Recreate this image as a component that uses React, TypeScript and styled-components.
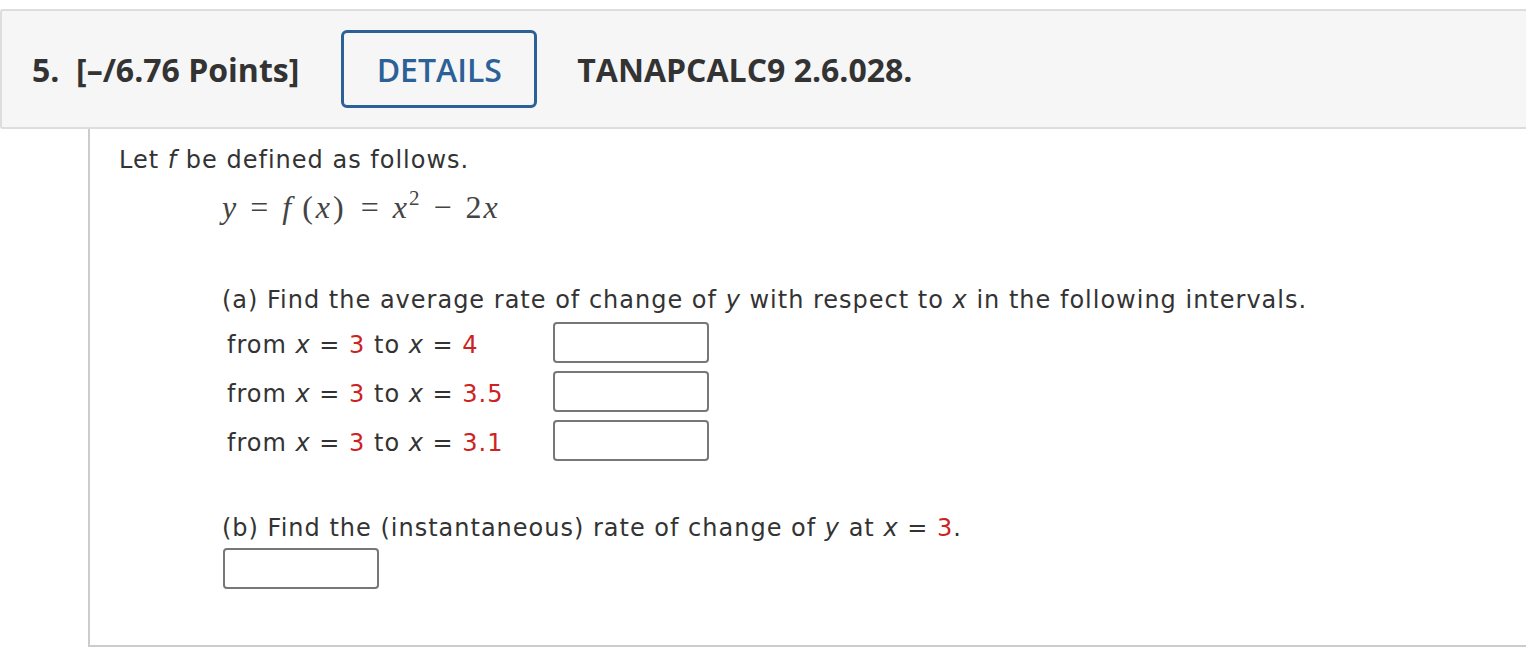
import React from 'react';
import styled, { createGlobalStyle } from 'styled-components';

const GlobalStyle = createGlobalStyle`
  html, body {
    margin: 0;
    padding: 0;
    background: #ffffff;
    overflow: hidden;
  }
`;

const Page = styled.div`
  width: 1526px;
  height: 654px;
  padding-top: 9px;
  box-sizing: border-box;
  overflow: hidden;
`;

const Header = styled.div`
  display: flex;
  align-items: center;
  height: 116px;
  box-sizing: content-box;
  width: 1540px;
  background: #f6f6f6;
  border: 2px solid #dddddd;
  border-right: none;
  border-radius: 3px 0 0 3px;
  padding-left: 30px;
  font-family: "Open Sans", sans-serif;
  font-weight: 700;
  font-size: 32px;
  color: #333333;
`;

const Points = styled.span`
  margin-right: 42px;
  white-space: pre;
`;

const DetailsButton = styled.div`
  display: flex;
  align-items: center;
  justify-content: center;
  width: 196px;
  height: 78px;
  box-sizing: border-box;
  border: 3px solid #2b6196;
  border-radius: 6px;
  color: #2b6196;
  font-weight: 600;
  margin-right: 40px;
`;

const Code = styled.span``;

const Body = styled.div`
  margin-left: 88px;
  height: 518px;
  box-sizing: border-box;
  border-left: 2px solid #cccccc;
  border-bottom: 2px solid #cccccc;
  padding: 16px 0 0 29px;
  font-family: "DejaVu Sans", Verdana, sans-serif;
  font-size: 24px;
  letter-spacing: 1px;
  color: #333333;
`;

const Line = styled.div<{ $indent?: boolean; $top?: number }>`
  margin-left: ${(p) => (p.$indent ? 103 : 0)}px;
  margin-top: ${(p) => p.$top ?? 0}px;
  line-height: 30px;
  white-space: nowrap;
`;

const Math = styled.div`
  display: flex;
  align-items: baseline;
  margin: 15px 0 0 103px;
  font-family: "Liberation Serif", "Times New Roman", serif;
  font-size: 32px;
  letter-spacing: 0;
  color: #444444;
  line-height: 34px;
`;

const Var = styled.i<{ $r?: number }>`
  font-family: "Liberation Serif", serif;
  margin-right: ${(p) => p.$r ?? 0}px;
`;

const Op = styled.span`
  margin: 0 14px;
`;

const Paren = styled.span`
  margin: 0 3px;
`;

const Sup = styled.span`
  font-size: 21px;
  position: relative;
  top: -13px;
  margin-left: 2px;
`;

const Red = styled.span`
  color: #cc2222;
`;

const Rows = styled.div`
  display: grid;
  grid-template-columns: 326px 156px;
  row-gap: 8px;
  align-items: center;
  margin: 7px 0 0 108px;
`;

const Answer = styled.div`
  width: 156px;
  height: 41px;
  box-sizing: border-box;
  border: 2px solid #777777;
  border-radius: 4px;
  background: #ffffff;
`;

const Prompt = styled.span`
  white-space: nowrap;
  padding-top: 4px;
`;

const Sans = styled.i`
  font-family: "DejaVu Sans", Verdana, sans-serif;
`;

const AnswerB = styled(Answer)`
  margin: 5px 0 0 104px;
`;

const rows = ['4', '3.5', '3.1'];

export default function App() {
  return (
    <Page>
      <GlobalStyle />
      <Header>
        <Points>5.  [–/6.76 Points]</Points>
        <DetailsButton>DETAILS</DetailsButton>
        <Code>TANAPCALC9 2.6.028.</Code>
      </Header>
      <Body>
        <Line>
          Let <Sans>f</Sans> be defined as follows.
        </Line>
        <Math>
          <Var>y</Var>
          <Op>=</Op>
          <Var $r={8}>f</Var>
          <Paren>(</Paren>
          <Var>x</Var>
          <Paren>)</Paren>
          <Op>=</Op>
          <Var>x</Var>
          <Sup>2</Sup>
          <Op>−</Op>
          <Var as="span" $r={2}>2</Var>
          <Var>x</Var>
        </Math>
        <Line $indent $top={57}>
          (a) Find the average rate of change of <Sans>y</Sans> with respect to <Sans>x</Sans> in the
          following intervals.
        </Line>
        <Rows>
          {rows.map((r) => (
            <React.Fragment key={r}>
              <Prompt>
                from <Sans>x</Sans> = <Red>3</Red> to <Sans>x</Sans> = <Red>{r}</Red>
              </Prompt>
              <Answer />
            </React.Fragment>
          ))}
        </Rows>
        <Line $indent $top={52}>
          (b) Find the (instantaneous) rate of change of <Sans>y</Sans> at <Sans>x</Sans> ={' '}
          <Red>3</Red>.
        </Line>
        <AnswerB />
      </Body>
    </Page>
  );
}
